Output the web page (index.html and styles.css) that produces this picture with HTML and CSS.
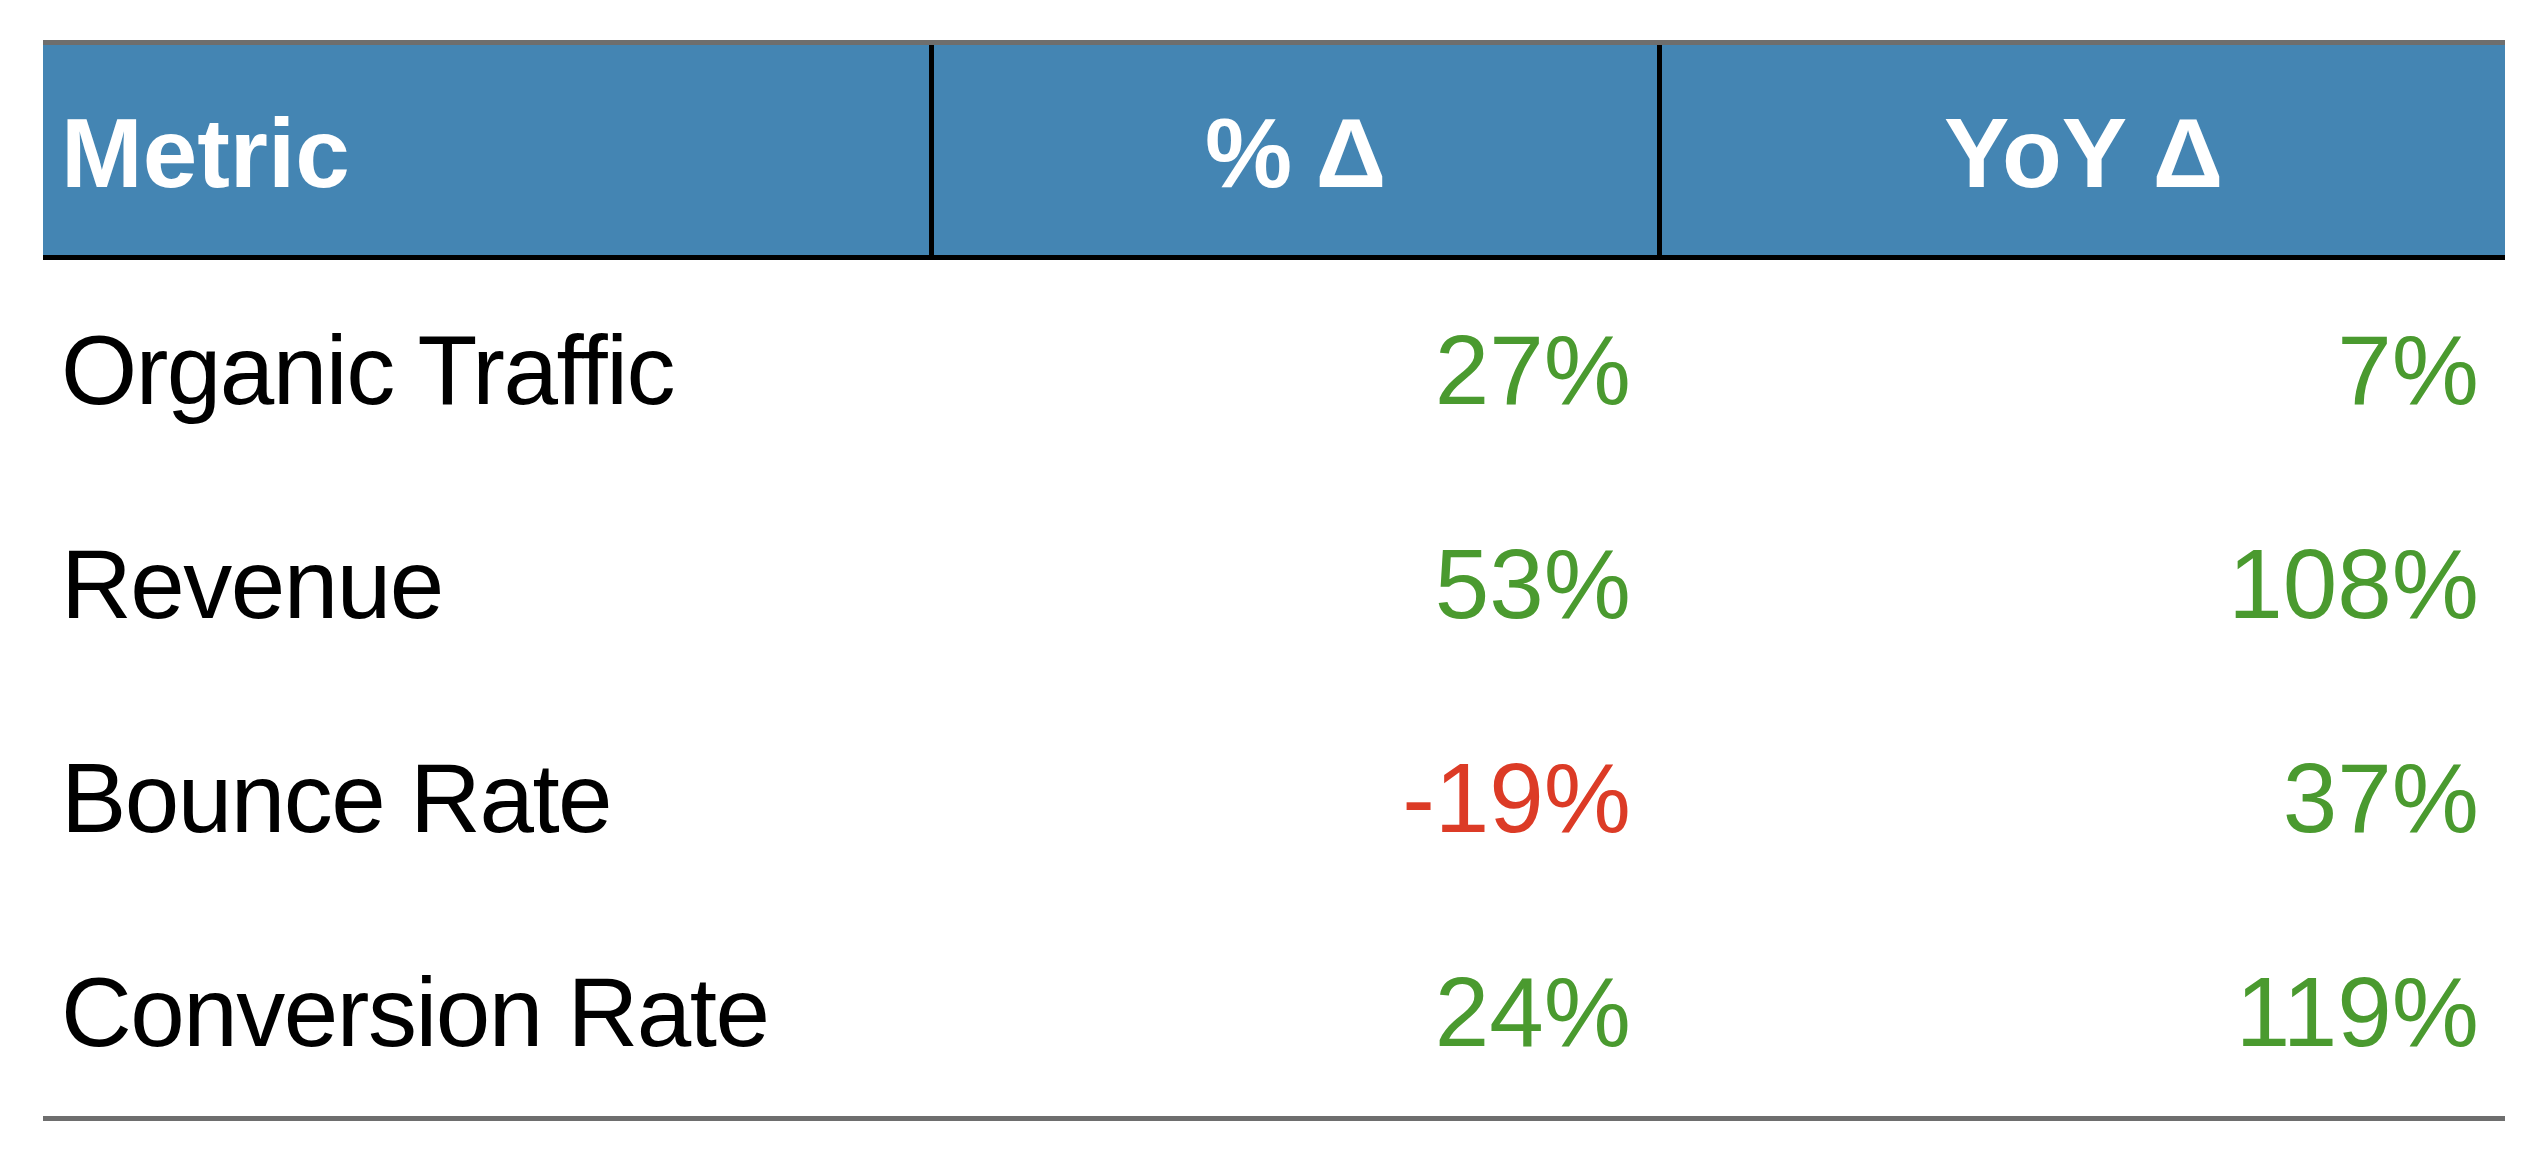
FILE: index.html
```html
<!DOCTYPE html>
<html lang="en">
  <head>
    <meta charset="UTF-8" />
    <title>Metric changes</title>
    <link rel="stylesheet" href="styles.css">
  </head>
  <body>
    <table class="metrics">
      <thead>
        <tr>
          <th class="col-metric">Metric</th>
          <th class="col-pct">% Δ</th>
          <th class="col-yoy">YoY Δ</th>
        </tr>
      </thead>
      <tbody>
        <tr>
          <td>Organic Traffic</td>
          <td class="num up">27%</td>
          <td class="num up">7%</td>
        </tr>
        <tr>
          <td>Revenue</td>
          <td class="num up">53%</td>
          <td class="num up">108%</td>
        </tr>
        <tr>
          <td>Bounce Rate</td>
          <td class="num down">-19%</td>
          <td class="num up">37%</td>
        </tr>
        <tr>
          <td>Conversion Rate</td>
          <td class="num up">24%</td>
          <td class="num up">119%</td>
        </tr>
      </tbody>
    </table>
  </body>
</html>
```

FILE: styles.css
```css
:root {
  --header-blue: #4485b3;
  --rule-grey: #6e6e6e;
  --green: #4a9a2f;
  --red: #dc3b26;
  --black: #000000;
  --white: #ffffff;
}

body {
  margin: 0;
  padding: 40px 43px;
  background-color: var(--white);
  font-family: "Liberation Sans", Arial, Helvetica, sans-serif;
  color: var(--black);
}

.metrics {
  width: 2462px;
  table-layout: fixed;
  border-collapse: separate;
  border-spacing: 0;
  border-top: 5px solid var(--rule-grey);
  border-bottom: 5px solid var(--rule-grey);
}

.metrics th,
.metrics td {
  box-sizing: border-box;
  padding: 0 18px;
  font-size: 98px;
  line-height: 1;
  vertical-align: middle;
}

.metrics th {
  height: 215px;
  padding-top: 6px;
  background-color: var(--header-blue);
  color: var(--white);
  font-weight: bold;
  text-align: center;
  border-bottom: 5px solid var(--black);
}

.metrics th.col-metric {
  width: 886px;
  text-align: left;
}

.metrics th.col-pct {
  width: 728px;
  border-left: 5px solid var(--black);
}

.metrics th.col-yoy {
  border-left: 5px solid var(--black);
}

.metrics td {
  height: 214px;
  padding-top: 5px;
  font-weight: normal;
  letter-spacing: -1.5px;
}

.metrics td.num {
  text-align: right;
  padding-right: 26px;
  letter-spacing: 0;
}

.up {
  color: var(--green);
}

.down {
  color: var(--red);
}
```
